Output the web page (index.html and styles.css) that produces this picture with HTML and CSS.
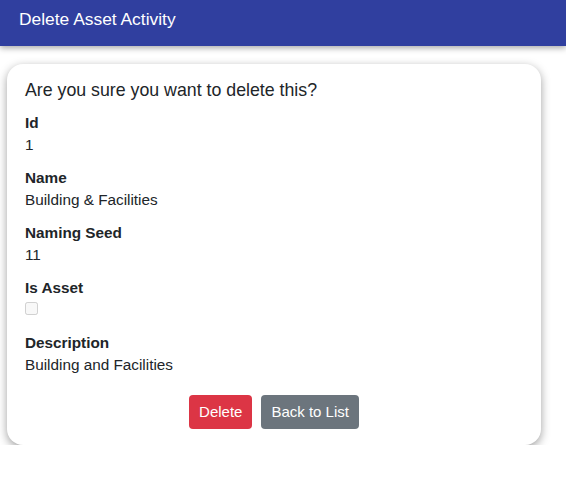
FILE: index.html
```html
<!DOCTYPE html>
<html>
<head>
<meta charset="utf-8">
<link rel="stylesheet" href="styles.css">
</head>
<body>
<header class="topbar">
  <h1 class="title">Delete Asset Activity</h1>
</header>
<main class="card">
  <h2 class="question">Are you sure you want to delete this?</h2>
  <dl class="fields">
    <dt class="label">Id</dt>
    <dd class="value">1</dd>
    <dt class="label">Name</dt>
    <dd class="value">Building &amp; Facilities</dd>
    <dt class="label">Naming Seed</dt>
    <dd class="value">11</dd>
    <dt class="label">Is Asset</dt>
    <dd class="value"><input type="checkbox" class="check" disabled></dd>
    <dt class="label">Description</dt>
    <dd class="value">Building and Facilities</dd>
  </dl>
  <div class="actions">
    <button class="btn btn-danger">Delete</button>
    <button class="btn btn-secondary">Back to List</button>
  </div>
</main>
</body>
</html>
```

FILE: styles.css
```css
html, body {
  margin: 0;
  padding: 0;
  background: #ffffff;
  font-family: "Liberation Sans", Arial, sans-serif;
  color: #212529;
}
.topbar {
  height: 46px;
  background: #303f9f;
  box-shadow: 0 2px 6px rgba(0,0,0,0.35);
  padding: 0 19px;
  box-sizing: border-box;
}
.title {
  margin: 0;
  font-size: 17.4px;
  font-weight: normal;
  line-height: 38px;
  color: #ffffff;
}
.card {
  display: block;
  margin: 18px 25px 0 7px;
  background: #fff;
  border-radius: 16px;
  box-shadow: 0 3px 10px rgba(0,0,0,0.38);
  padding: 14px 18px 16px;
}
.question {
  margin: 0 0 11px;
  font-size: 17.75px;
  font-weight: normal;
  line-height: 24px;
}
.fields {
  margin: 0;
}
.label {
  font-size: 15.3px;
  font-weight: bold;
  line-height: 20px;
  margin: 0 0 2px;
}
.value {
  margin: 0 0 13px;
  font-size: 15.3px;
  line-height: 20px;
}
.value:last-child {
  margin-bottom: 0;
}
.check {
  margin: 2px 0 0;
  width: 13px;
  height: 13px;
  vertical-align: top;
}
.actions {
  display: flex;
  justify-content: center;
  gap: 9px;
  margin-top: 20px;
}
.btn {
  font-family: "Liberation Sans", Arial, sans-serif;
  font-size: 15px;
  line-height: 22px;
  padding: 6px 10px;
  border: none;
  border-radius: 4px;
  color: #fff;
}
.btn-danger { background: #dc3545; }
.btn-secondary { background: #6c757d; }
```
